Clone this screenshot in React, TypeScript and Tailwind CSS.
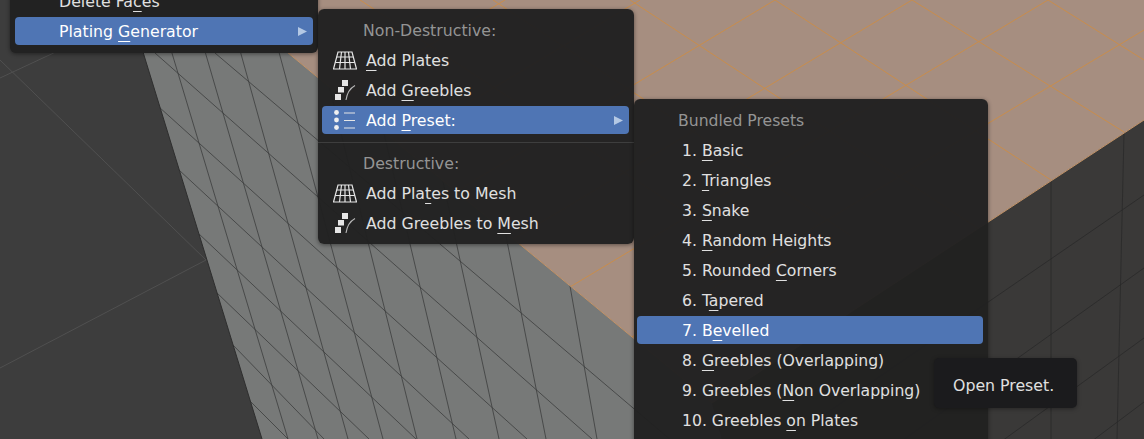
const steep = [
  [156, 0, 288, 439],
  [190, 0, 318, 439],
  [226, 0, 348, 439],
  [265, 0, 383, 439],
  [321, 53, 417, 439],
  [365, 53, 456, 439],
  [415, 53, 499, 439],
  [470, 53, 546, 439],
  [543, 133, 597, 439],
];
const diagonal = [
  [155, 53, 592, 439],
  [215, 53, 712, 475],
  [159, 107, 527, 439],
  [179, 170, 469, 439],
  [198, 233, 416, 439],
  [216, 292, 369, 439],
  [233, 345, 324, 439],
  [249, 400, 288, 439],
];
const orangeLines = [
  [1048, 0, 1144, 60],
  [912, 0, 1124, 132],
  [775, 0, 1051, 180],
  [630, 0, 988, 235],
  [493, 0, 850, 235],
  [360, 0, 720, 235],
  [1144, 30, 600, 356],
  [1048, 0, 570, 287],
  [912, 0, 400, 307],
  [775, 0, 300, 285],
  [640, 0, 300, 204],
  [505, 0, 300, 123],
];
const darkLines = [
  [1051, 180, 1051, 439],
  [1124, 132, 1117, 439],
  [1144, 195, 700, 500],
  [1144, 268, 700, 585],
  [1144, 338, 700, 660],
  [1144, 402, 1000, 510],
];

function Viewport() {
  return (
    <svg className="absolute inset-0" width="1144" height="439" viewBox="0 0 1144 439">
      <defs>
        <clipPath id="gray-face">
          <polygon points="127,0 224,0 712,403 722,439 262,439" />
        </clipPath>
        <clipPath id="orange-face">
          <polygon points="224,0 1144,0 1144,120 712,403" />
        </clipPath>
        <clipPath id="dark-face">
          <polygon points="1144,120 1144,439 722,439 712,403" />
        </clipPath>
      </defs>
      <rect width="1144" height="439" fill="#3d3d3d" />
      {/* floor grid */}
      <line x1="0" y1="60" x2="206" y2="260" stroke="#505050" />
      <line x1="0" y1="368" x2="206" y2="260" stroke="#505050" />
      <line x1="0" y1="78" x2="60" y2="50" stroke="#505050" />
      <polygon points="127,0 224,0 712,403 722,439 262,439" fill="#777978" />
      <polygon points="224,0 1144,0 1144,120 712,403" fill="#a68e80" />
      <polygon points="1144,120 1144,439 722,439 712,403" fill="#3a3938" />
      <g clipPath="url(#gray-face)" stroke="#3c3e3e" strokeWidth="0.8">
        {[...steep, ...diagonal].map((l, i) => (
          <line key={i} x1={l[0]} y1={l[1]} x2={l[2]} y2={l[3]} />
        ))}
      </g>
      <g clipPath="url(#orange-face)" stroke="#c88d4c" strokeWidth="1">
        {orangeLines.map((l, i) => (
          <line key={i} x1={l[0]} y1={l[1]} x2={l[2]} y2={l[3]} />
        ))}
      </g>
      <g clipPath="url(#dark-face)" stroke="#2a2a29" strokeWidth="0.8">
        {darkLines.map((l, i) => (
          <line key={i} x1={l[0]} y1={l[1]} x2={l[2]} y2={l[3]} />
        ))}
      </g>
      <line x1="224" y1="0" x2="712" y2="403" stroke="#c39468" />
      <line x1="1144" y1="120" x2="712" y2="403" stroke="#c39468" />
      <line x1="127" y1="0" x2="262" y2="439" stroke="#2e2e2e" />
    </svg>
  );
}

function PlatesIcon() {
  return (
    <svg width="24" height="24" viewBox="0 0 24 24" fill="none" stroke="#e6e6e6" strokeWidth="1.2">
      <path d="M5 4h14l4.5 17H.5z" />
      <path d="M3.7 9h16.6M2.2 14.5h19.6M8.5 4L6.5 21M12 4v17M15.5 4L17.5 21" />
    </svg>
  );
}

function GreeblesIcon() {
  return (
    <svg width="24" height="24" viewBox="0 0 24 24" fill="none">
      <rect x="9" y="2" width="6" height="6" fill="#e6e6e6" />
      <rect x="5" y="9" width="6" height="5.5" fill="#e6e6e6" />
      <rect x="2" y="16" width="6" height="6" fill="#e6e6e6" />
      <path d="M22 7.5C17.5 10 14 15 13 22" stroke="#b8b8b8" strokeWidth="1.1" />
    </svg>
  );
}

function PresetIcon() {
  return (
    <svg width="24" height="24" viewBox="0 0 24 24" fill="none">
      <circle cx="3.5" cy="4.5" r="2.4" fill="#f0f0f0" />
      <circle cx="3.5" cy="12" r="2.4" fill="#f0f0f0" />
      <circle cx="3.5" cy="19.5" r="2.4" fill="#f0f0f0" />
      <path d="M11 5h11M11 12.5h11M11 20h11" stroke="#e6e6e6" strokeWidth="1.1" />
    </svg>
  );
}

function Arrow() {
  return (
    <svg className="absolute right-[6px] top-[10px]" width="9" height="9" viewBox="0 0 9 9">
      <polygon points="0,0 9,4.5 0,9" fill="#b4c8e4" />
    </svg>
  );
}

// text with the accelerator letter underlined
function Label({ text, at }: { text: string; at?: number }) {
  if (at === undefined) return <span>{text}</span>;
  return (
    <span>
      {text.slice(0, at)}
      <span className="underline decoration-1 underline-offset-[4px] [text-decoration-skip-ink:none]">{text[at]}</span>
      {text.slice(at + 1)}
    </span>
  );
}

interface RowProps {
  text: string;
  at?: number;
  icon?: React.ReactNode;
  active?: boolean;
  arrow?: boolean;
  indent: string;
}

function Row({ text, at, icon, active, arrow, indent }: RowProps) {
  return (
    <div
      className={`relative flex h-7 items-center rounded-[4px] pt-px ${indent} ${
        active ? 'bg-[#4f75b4] text-white' : 'text-[#e0e0e0]'
      }`}
    >
      {icon && <div className="absolute left-[11px] top-[2px] h-6 w-6">{icon}</div>}
      <Label text={text} at={at} />
      {arrow && <Arrow />}
    </div>
  );
}

function Header({ text, indent }: { text: string; indent: string }) {
  return <div className={`flex h-7 items-center pt-px text-[#949494] ${indent}`}>{text}</div>;
}

const presets: [string, number][] = [
  ['1. Basic', 3],
  ['2. Triangles', 3],
  ['3. Snake', 3],
  ['4. Random Heights', 3],
  ['5. Rounded Corners', 11],
  ['6. Tapered', 4],
  ['7. Bevelled', 4],
  ['8. Greebles (Overlapping)', 3],
  ['9. Greebles (Non Overlapping)', 13],
  ['10. Greebles on Plates', 13],
];

export default function App() {
  return (
    <div className="relative h-[439px] w-[1144px] overflow-hidden bg-[#3d3d3d] font-['DejaVu_Sans',sans-serif] text-[15.75px]">
      <Viewport />

      {/* first menu, cut off by the top of the window */}
      <div className="absolute left-[10px] top-[-17px] flex w-[308px] flex-col gap-0.5 rounded-[6px] bg-[#222222] px-[5px] pb-2 pt-1 shadow-[0_1px_4px_rgba(0,0,0,0.45)]">
        <Row text="Delete Faces" at={9} indent="pl-[44px]" />
        <Row text="Plating Generator" at={8} active arrow indent="pl-[44px]" />
      </div>

      {/* second menu */}
      <div className="absolute left-[318px] top-[9px] flex h-[235px] w-[316px] flex-col gap-0.5 rounded-[6px] bg-[#212121]/[.97] pl-1 pr-[5px] pt-[7px] shadow-[0_1px_4px_rgba(0,0,0,0.45)]">
        <Header text="Non-Destructive:" indent="pl-[41px]" />
        <Row text="Add Plates" at={0} icon={<PlatesIcon />} indent="pl-[44px]" />
        <Row text="Add Greebles" at={4} icon={<GreeblesIcon />} indent="pl-[44px]" />
        <Row text="Add Preset:" at={4} icon={<PresetIcon />} active arrow indent="pl-[44px]" />
        <div className="-ml-1 -mr-[5px] mb-[4px] mt-[6px] h-px bg-[#3e3e3e]" />
        <Header text="Destructive:" indent="pl-[41px]" />
        <Row text="Add Plates to Mesh" at={7} icon={<PlatesIcon />} indent="pl-[44px]" />
        <Row text="Add Greebles to Mesh" at={16} icon={<GreeblesIcon />} indent="pl-[44px]" />
      </div>

      {/* third menu, cut off by the bottom of the window */}
      <div className="absolute left-[634px] top-[99px] flex h-[360px] w-[354px] flex-col gap-0.5 rounded-[6px] bg-[#212121]/[.97] pl-[3px] pr-[5px] pt-[7px] text-[15.65px] shadow-[0_1px_4px_rgba(0,0,0,0.45)]">
        <Header text="Bundled Presets" indent="pl-[41px]" />
        {presets.map(([text, at], i) => (
          <Row key={text} text={text} at={at} active={i === 6} indent="pl-[45px]" />
        ))}
      </div>

      {/* tooltip */}
      <div className="absolute left-[934px] top-[358px] flex h-[50px] w-[143px] items-start rounded-[5px] bg-[#1b1b1d] pl-[19px] pt-[19px] leading-[18px] text-[#e0e0e0] shadow-[0_1px_4px_rgba(0,0,0,0.35)]">
        Open Preset.
      </div>
    </div>
  );
}
